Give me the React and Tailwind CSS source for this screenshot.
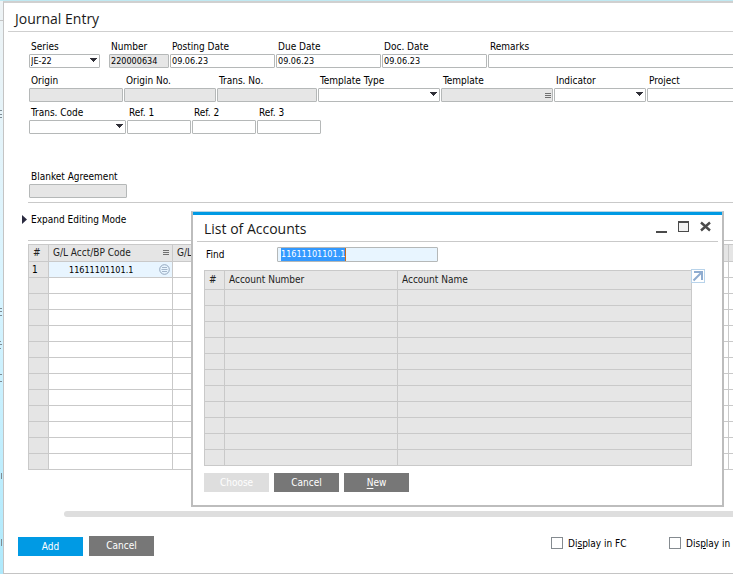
const label = "block w-fit whitespace-nowrap px-0.5 pt-0.5 text-[10px] leading-[14px] text-black";
const field = "block h-3.5 w-full rounded-[1px] border border-[#b5b8b8] px-px text-[9px] leading-3 text-black outline-none";

function Field({ id, text, value = "", width, off = false, menu = false }) {
  return (
    <div className={width}>
      <label htmlFor={id} className={label}>{text}</label>
      <div className="relative">
        <input id={id} defaultValue={value} readOnly={off} className={`${field} ${off ? "bg-[#e6e6e6]" : "bg-white"}`} />
        {menu && <Lines className="absolute right-0.5 top-[5px]" />}
      </div>
    </div>
  );
}

function Drop({ id, text, value = "", width }) {
  return (
    <div className={width}>
      <label htmlFor={id} className={label}>{text}</label>
      <div className="relative">
        <select id={id} className={`${field} appearance-none bg-white`} defaultValue={value}>
          <option>{value}</option>
        </select>
        <svg className="pointer-events-none absolute right-[3px] top-1 h-1 w-[7px]" viewBox="0 0 7 4" shapeRendering="crispEdges">
          <path d="M0 0h7v1H6v1H5v1H4v1H3V3H2V2H1V1H0z" fill="#303038" />
        </svg>
      </div>
    </div>
  );
}

function Lines({ className = "" }) {
  return (
    <svg className={`h-[6px] w-[6px] shrink-0 ${className}`} viewBox="0 0 6 6" shapeRendering="crispEdges">
      <path d="M0 .5h6M0 2.500h6M0 4.500h6" stroke="#707070" strokeWidth="1" />
    </svg>
  );
}

function Button({ children, className }) {
  return <button type="button" className={`w-[65px] text-[10px] leading-4 text-white ${className}`}>{children}</button>;
}

const cell = "border border-[#c9c9c9] p-0 font-normal";

function Entries() {
  return (
    <table className="w-[780px] table-fixed border-collapse text-[10px] leading-3 text-[#222]">
      <colgroup>
        <col className="w-5" />
        <col className="w-[124px]" />
        <col className="w-[556px]" />
        <col />
      </colgroup>
      <thead>
        <tr className="h-[17px] bg-[#e5e5e5] text-left">
          <th className={`${cell} pl-1`}>#</th>
          <th className={cell}>
            <div className="flex items-center justify-between pl-1 pr-[3px]">G/L Acct/BP Code<Lines /></div>
          </th>
          <th className={`${cell} pl-1`}>G/L</th>
          <th className={cell} />
        </tr>
      </thead>
      <tbody>
        <tr className="h-4 text-black">
          <td className={`${cell} bg-[#e5e5e5] pl-[3px]`}>1</td>
          <td className={`${cell} bg-[#e8f5ff]`}>
            <div className="flex items-center justify-between pl-5 pr-0.5 text-[9px]">
              11611101101.1
              <svg className="h-[11px] w-[11px]" viewBox="0 0 11 11" fill="none" stroke="#92a6bd">
                <circle cx="5.500" cy="5.500" r="4.800" />
                <path d="M3 3.500h5M2.500 5.500h6M3 7.500h5" strokeWidth=".8" />
              </svg>
            </div>
          </td>
          <td className={cell} />
          <td className={cell} />
        </tr>
        {Array.from({ length: 12 }, (_, i) => (
          <tr key={i} className="h-4">
            <td className={`${cell} bg-[#e5e5e5]`} />
            <td className={cell} />
            <td className={cell} />
            <td className={cell} />
          </tr>
        ))}
      </tbody>
    </table>
  );
}

function AccountsDialog() {
  return (
    <section className="absolute left-[191px] top-[211px] w-[533px] border-x-2 border-b-2 border-t border-[#bdbdbd] border-t-[#b9d5e3] bg-white pb-[13px]">
      <div className="h-[3px] bg-[#009ae4]" />
      <header className="mx-1 flex h-[27px] items-center justify-between border-b border-[#c9c9c9] px-[7px]">
        <h2 className="pt-0.5 font-['Open_Sans',sans-serif] text-[14px] leading-5 text-[#1a1a1a]">List of Accounts</h2>
        <div className="flex h-[15px] gap-[11px]">
          <button type="button" aria-label="Minimize" className="h-3 w-[11px] border-b-2 border-[#4a4a4a]" />
          <button type="button" aria-label="Maximize" className="h-[11px] w-[11px] border border-t-2 border-[#4a4a4a] bg-[#f2f2f2]" />
          <button type="button" aria-label="Close" className="h-[11px] w-[11px]">
            <svg className="h-[11px] w-[11px]" viewBox="0 0 11 11" stroke="#4a4a4a" strokeWidth="2.400">
              <path d="M1 1.500l9 8M10 1.500l-9 8" />
            </svg>
          </button>
        </div>
      </header>
      <div className="flex items-center pl-[11px] pt-[5px]">
        <label htmlFor="find" className="w-[73px] pl-0.5 text-[10px] leading-3">Find</label>
        <div className="relative">
          <input id="find" className="block h-[15px] w-[161px] rounded-[1px] border border-[#b5b8b8] bg-[#e8f5ff] outline-none" />
          <span className="absolute left-1 top-px border-r border-[#c76a1c] bg-[#3399ff] text-[9px] leading-[13px] text-white">11611101101.1</span>
        </div>
      </div>
      <div className="mt-2 flex items-start pl-[11px]">
        <table className="w-[488px] table-fixed border-collapse bg-[#e6e6e6] text-[10px] leading-3 text-[#222]">
          <colgroup>
            <col className="w-5" />
            <col className="w-[173px]" />
            <col />
          </colgroup>
          <thead>
            <tr className="h-[19px] text-left">
              <th className={`${cell} pl-1`}>#</th>
              <th className={`${cell} pl-1`}>Account Number</th>
              <th className={`${cell} pl-1`}>Account Name</th>
            </tr>
          </thead>
          <tbody>
            {Array.from({ length: 11 }, (_, i) => (
              <tr key={i} className="h-4">
                <td className={cell} />
                <td className={cell} />
                <td className={cell} />
              </tr>
            ))}
          </tbody>
        </table>
        <button type="button" aria-label="Expand" className="-ml-px -mt-px border border-[#b8d3ea] bg-white">
          <svg className="h-3 w-3" viewBox="0 0 12 12" fill="none" stroke="#8facd0" strokeWidth="2">
            <path d="M2 2h8v8M9.500 2.500L1.500 10.500" />
          </svg>
        </button>
      </div>
      <div className="mt-[7px] flex gap-[5px] pl-[11px]">
        <Button className="h-[19px] bg-[#dedede]">Choose</Button>
        <Button className="h-[19px] bg-[#777]">Cancel</Button>
        <Button className="h-[19px] bg-[#777]"><span className="underline underline-offset-2">N</span>ew</Button>
      </div>
    </section>
  );
}

function Check({ children, id }) {
  return (
    <label htmlFor={id} className="flex w-[118px] items-center gap-[5px] whitespace-nowrap text-[10px] leading-3">
      <input id={id} type="checkbox" className="h-3 w-3 shrink-0 appearance-none border border-[#858b90] bg-white" />
      <span className="pt-0.5 leading-[10px]">{children}</span>
    </label>
  );
}

export default function App() {
  return (
    <div className="relative flex min-h-screen overflow-hidden bg-[#c0e9f2] pt-px font-['DejaVu_Sans_Condensed','DejaVu_Sans',sans-serif]">
      <div className="w-[3px] shrink-0 bg-linear-to-b from-[#eef3f5] via-[#d8f4ff] to-[#aee9fc]">
        <svg className="h-[573px] w-[3px]" viewBox="0 0 3 573" fill="none" stroke="#7f8c94" shapeRendering="crispEdges">
          <path d="M0 19.500h3" stroke="#c4c4c4" />
          <path d="M0 109.500h2M0 113.500h2M0 116.500h2M0 307.500h2M0 310.500h2M0 314.500h2M0 340.500h1M0 343.500h2M0 347.500h1M0 373.500h2M0 380.500h2M1.500 472v6M1 538v7" />
        </svg>
      </div>
      <main className="min-w-0 flex-1 border-b border-l border-t-2 border-[#c4c4c4] border-t-[#d0d0d0] bg-white">
        <header className="ml-1 border-b border-[#cfcfcf] pb-0.5 pl-[7px] pt-1.5">
          <h1 className="font-['Open_Sans',sans-serif] text-[14px] leading-5 text-[#1a1a1a]">Journal Entry</h1>
        </header>
        <form className="pl-[25px]">
          <div className="flex gap-px pt-1.5">
            <Drop id="series" text="Series" value="JE-22" width="mr-2 w-[71px]" />
            <Field id="number" text="Number" value="220000634" width="w-[60px]" off />
            <Field id="posting" text="Posting Date" value="09.06.23" width="w-[105px]" />
            <Field id="due" text="Due Date" value="09.06.23" width="w-[105px]" />
            <Field id="doc" text="Doc. Date" value="09.06.23" width="w-[105px]" />
            <Field id="remarks" text="Remarks" width="-mr-1 flex-1" />
          </div>
          <div className="flex gap-px pt-1">
            <Field id="origin" text="Origin" width="w-[94px]" off />
            <Field id="origin-no" text="Origin No." width="w-[92px]" off />
            <Field id="trans-no" text="Trans. No." width="w-[100px]" off />
            <Drop id="template-type" text="Template Type" width="w-[122px]" />
            <Field id="template" text="Template" width="w-[112px]" off menu />
            <Drop id="indicator" text="Indicator" width="w-[92px]" />
            <Field id="project" text="Project" width="-mr-1 flex-1" />
          </div>
          <div className="flex gap-px pt-0.5">
            <Drop id="trans-code" text="Trans. Code" width="w-[97px]" />
            <Field id="ref1" text="Ref. 1" width="w-16" />
            <Field id="ref2" text="Ref. 2" width="w-16" />
            <Field id="ref3" text="Ref. 3" width="w-16" />
          </div>
          <div className="pt-[34px]">
            <Field id="blanket" text="Blanket Agreement" width="w-[98px]" off />
          </div>
        </form>
        <div className="ml-6 mt-1 border-t border-[#c9c9c9]" />
        <button type="button" className="ml-[18px] mt-2 flex items-center gap-1 text-[10px] leading-4">
          <svg className="h-[9px] w-[5px]" viewBox="0 0 5 9"><path d="M0 0l5 4.500L0 9z" fill="#2b2b40" /></svg>
          <span className="pt-0.5 leading-[14px]">Expand Editing Mode</span>
        </button>
        <div className="ml-6 mt-[13px] border-t border-[#c9c9c9] pt-[3px]">
          <Entries />
        </div>
        <div className="-mr-2 ml-[60px] mt-[41px] h-1.5 rounded-full bg-[#dedede]" />
        <div className="flex h-14 items-start justify-between pl-3.5 pt-[19px]">
          <div className="flex items-end gap-1.5">
            <Button className="h-[19px] bg-[#009ae4]">Add</Button>
            <Button className="h-5 bg-[#777]">Cancel</Button>
          </div>
          <div className="-mr-[54px] flex pt-px">
            <Check id="fc">Di<u>s</u>play in FC</Check>
            <Check id="sc">Dis<u>p</u>lay in SC</Check>
          </div>
        </div>
      </main>
      <AccountsDialog />
    </div>
  );
}
